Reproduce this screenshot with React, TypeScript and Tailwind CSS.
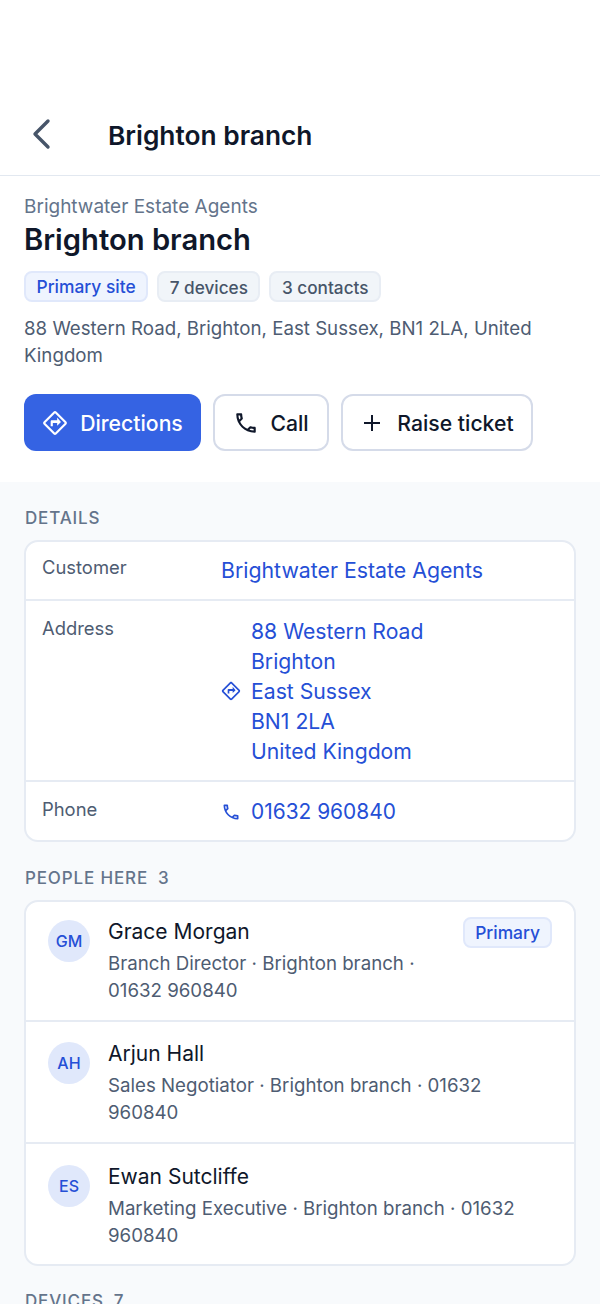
const DIRECTIONS =
	"M22.43 10.59l-9.01-9.01c-.75-.75-2.07-.76-2.83 0l-9 9c-.78.78-.78 2.04 0 2.82l9 9c.39.39.9.58 1.41.58.51 0 1.02-.19 1.41-.58l8.99-8.99c.79-.76.8-2.02.03-2.82zm-10.42 10.4l-9-9 9-9 9 9-9 9zM8 11v4h2v-3h4v2.5l3.5-3.5L14 7v2.5H9c-.55 0-1 .45-1 1z";
const CALL =
	"M6.54 5c.06.89.21 1.76.45 2.59l-1.2 1.2c-.41-1.2-.67-2.47-.76-3.79h1.51m9.86 12.02c.85.24 1.72.39 2.6.45v1.49c-1.32-.09-2.59-.35-3.8-.75l1.2-1.19M7.5 3H4c-.55 0-1 .45-1 1 0 9.39 7.61 17 17 17 .55 0 1-.45 1-1v-3.49c0-.55-.45-1-1-1-1.24 0-2.45-.2-3.57-.57-.1-.04-.21-.05-.31-.05-.26 0-.51.1-.71.29l-2.2 2.2c-2.83-1.45-5.15-3.76-6.59-6.59l2.2-2.2c.28-.28.36-.67.25-1.02C8.7 6.45 8.5 5.25 8.5 4c0-.55-.45-1-1-1z";

function Icon({ d, className }: { d: string; className: string }) {
	return (
		<svg viewBox="0 0 24 24" fill="currentColor" className={className}>
			<path d={d} />
		</svg>
	);
}

function Chip({ label, blue }: { label: string; blue?: boolean }) {
	return (
		<span
			className={
				blue
					? "h-[31px] px-[10.5px] pt-[2px] flex items-center rounded-[8px] border-2 border-[#e0e8fb] bg-[#eff4fe] text-[#254fd6] text-[17.4px] font-medium"
					: "h-[31px] px-[10.5px] pt-[2px] flex items-center rounded-[8px] border-2 border-[#e8edf4] bg-[#f1f5f9] text-[#475569] text-[17.2px] font-medium"
			}
		>
			{label}
		</span>
	);
}

function Person({ initials, name, lines, primary }: { initials: string; name: string; lines: string[]; primary?: boolean }) {
	return (
		<div
			className={
				primary
					? "flex h-[120px] px-[22px] pt-[18px] border-b-2 border-[#e6ebf3]"
					: "flex h-[122px] px-[22px] pt-[20px] border-b-2 border-[#e6ebf3] last:h-[120px] last:pt-[21px] last:border-b-0"
			}
		>
			<div className="w-[42px] h-[42px] rounded-full bg-[#e0e8fb] text-[#254fd6] text-[16px] font-medium flex items-center justify-center shrink-0">
				{initials}
			</div>
			<div className="ml-[18px] flex-1">
				<div className="flex justify-between items-start">
					<div className="text-[21px] leading-[24px] text-[#0f172a]">{name}</div>
					{primary && (
						<span className="h-[31px] -mt-[3px] px-[10px] pt-[1px] flex items-center rounded-[8px] border-2 border-[#e0e8fb] bg-[#eff4fe] text-[#254fd6] text-[17.4px] font-medium">
							Primary
						</span>
					)}
				</div>
				<div className={primary ? "mt-[2px] text-[18.7px] leading-[27px] text-[#4e5c72]" : "mt-[6px] text-[18.7px] leading-[27px] text-[#4e5c72]"}>
					{lines.map((l) => (
						<div key={l}>{l}</div>
					))}
				</div>
			</div>
		</div>
	);
}

export default function App() {
	return (
		<div className="h-[1304px] overflow-hidden bg-[#f8fafc] font-['Inter',sans-serif]">
			<header className="h-[176px] bg-white border-b border-[#e2e8f0] flex items-end pb-[21px]">
				<svg viewBox="0 0 24 36" fill="none" stroke="#475569" strokeWidth="3.4" strokeLinecap="round" strokeLinejoin="round" className="ml-[30px] w-[24px] h-[36px] mb-[2px]">
					<path d="M18 5 5 18l13 13" />
				</svg>
				<h1 className="ml-[54px] text-[26.3px] leading-[36px] font-semibold text-[#0f172a]">Brighton branch</h1>
			</header>

			<section className="bg-white h-[306px] px-[24px] pt-[19px]">
				<div className="text-[19px] leading-[24px] text-[#64748b]">Brightwater Estate Agents</div>
				<div className="mt-[1px] text-[29.2px] leading-[40px] font-semibold text-[#0f172a]">Brighton branch</div>
				<div className="flex gap-[9px] mt-[11px]">
					<Chip label="Primary site" blue />
					<Chip label="7 devices" />
					<Chip label="3 contacts" />
				</div>
				<p className="mt-[13px] text-[18.7px] leading-[27px] text-[#4e5c72]">
					88 Western Road, Brighton, East Sussex, BN1 2LA, United Kingdom
				</p>
				<div className="flex gap-[12px] mt-[25px]">
					<button className="h-[57px] w-[177px] pt-[2px] rounded-[12px] bg-[#3563e3] text-white text-[21.2px] font-medium flex items-center justify-center gap-[12px]">
						<Icon d={DIRECTIONS} className="w-[26px] h-[26px] -mt-[2px]" />
						Directions
					</button>
					<button className="h-[57px] w-[116px] pt-[2px] rounded-[12px] bg-white border-2 border-[#d5dbe9] text-[#0f172a] text-[21.2px] font-medium flex items-center justify-center gap-[11px]">
						<Icon d={CALL} className="w-[26px] h-[26px] -mt-[2px]" />
						Call
					</button>
					<button className="h-[57px] w-[192px] pt-[2px] rounded-[12px] bg-white border-2 border-[#d5dbe9] text-[#0f172a] text-[21.2px] font-medium flex items-center justify-center gap-[13px]">
						<svg viewBox="0 0 24 24" fill="none" stroke="currentColor" strokeWidth="2" className="w-[24px] h-[24px] -mt-[2px]">
							<path d="M12 4v16M4 12h16" />
						</svg>
						Raise ticket
					</button>
				</div>
			</section>

			<main className="px-[24px]">
				<div className="pt-[25px] pl-[1px] h-[58px] text-[17px] leading-[22px] font-medium tracking-[0.05em] text-[#64748b]">DETAILS</div>
				<div className="bg-white rounded-[14px] border-2 border-[#e6ebf3] text-[#254fd6]">
					<div className="flex h-[59px] border-b-2 border-[#e6ebf3]">
						<div className="w-[195px] pl-[16px] pt-[13px] text-[18.4px] leading-[24px] text-[#4e5c72]">Customer</div>
						<div className="pt-[14px] text-[21.3px] leading-[28px]">Brightwater Estate Agents</div>
					</div>
					<div className="flex h-[181px] border-b-2 border-[#e6ebf3]">
						<div className="w-[195px] pl-[16px] pt-[15px] text-[18.4px] leading-[24px] text-[#4e5c72]">Address</div>
						<div className="flex items-center gap-[10px] pt-[1px]">
							<Icon d={DIRECTIONS} className="w-[20px] h-[20px]" />
							<div className="text-[21.2px] leading-[30px]">
								<div>88 Western Road</div>
								<div>Brighton</div>
								<div>East Sussex</div>
								<div>BN1 2LA</div>
								<div>United Kingdom</div>
							</div>
						</div>
					</div>
					<div className="flex h-[58px]">
						<div className="w-[195px] pl-[16px] pt-[15px] text-[18.4px] leading-[24px] text-[#4e5c72]">Phone</div>
						<div className="flex items-center gap-[10px] pt-[1px]">
							<Icon d={CALL} className="w-[20px] h-[20px]" />
							<div className="text-[20.9px] leading-[28px]">01632 960840</div>
						</div>
					</div>
				</div>

				<div className="pt-[25px] pl-[1px] h-[58px] text-[17px] leading-[22px] font-medium tracking-[0.05em] text-[#64748b] flex gap-[10px]">
					<span>PEOPLE HERE</span>
					<span>3</span>
				</div>
				<div className="bg-white rounded-[14px] border-2 border-[#e6ebf3]">
					<Person initials="GM" name="Grace Morgan" lines={["Branch Director · Brighton branch ·", "01632 960840"]} primary />
					<Person initials="AH" name="Arjun Hall" lines={["Sales Negotiator · Brighton branch · 01632", "960840"]} />
					<Person initials="ES" name="Ewan Sutcliffe" lines={["Marketing Executive · Brighton branch · 01632", "960840"]} />
				</div>

				<div className="pt-[24px] pl-[1px] text-[17px] leading-[22px] font-medium tracking-[0.05em] text-[#64748b] flex gap-[10px]">
					<span>DEVICES</span>
					<span>7</span>
				</div>
			</main>
		</div>
	);
}
